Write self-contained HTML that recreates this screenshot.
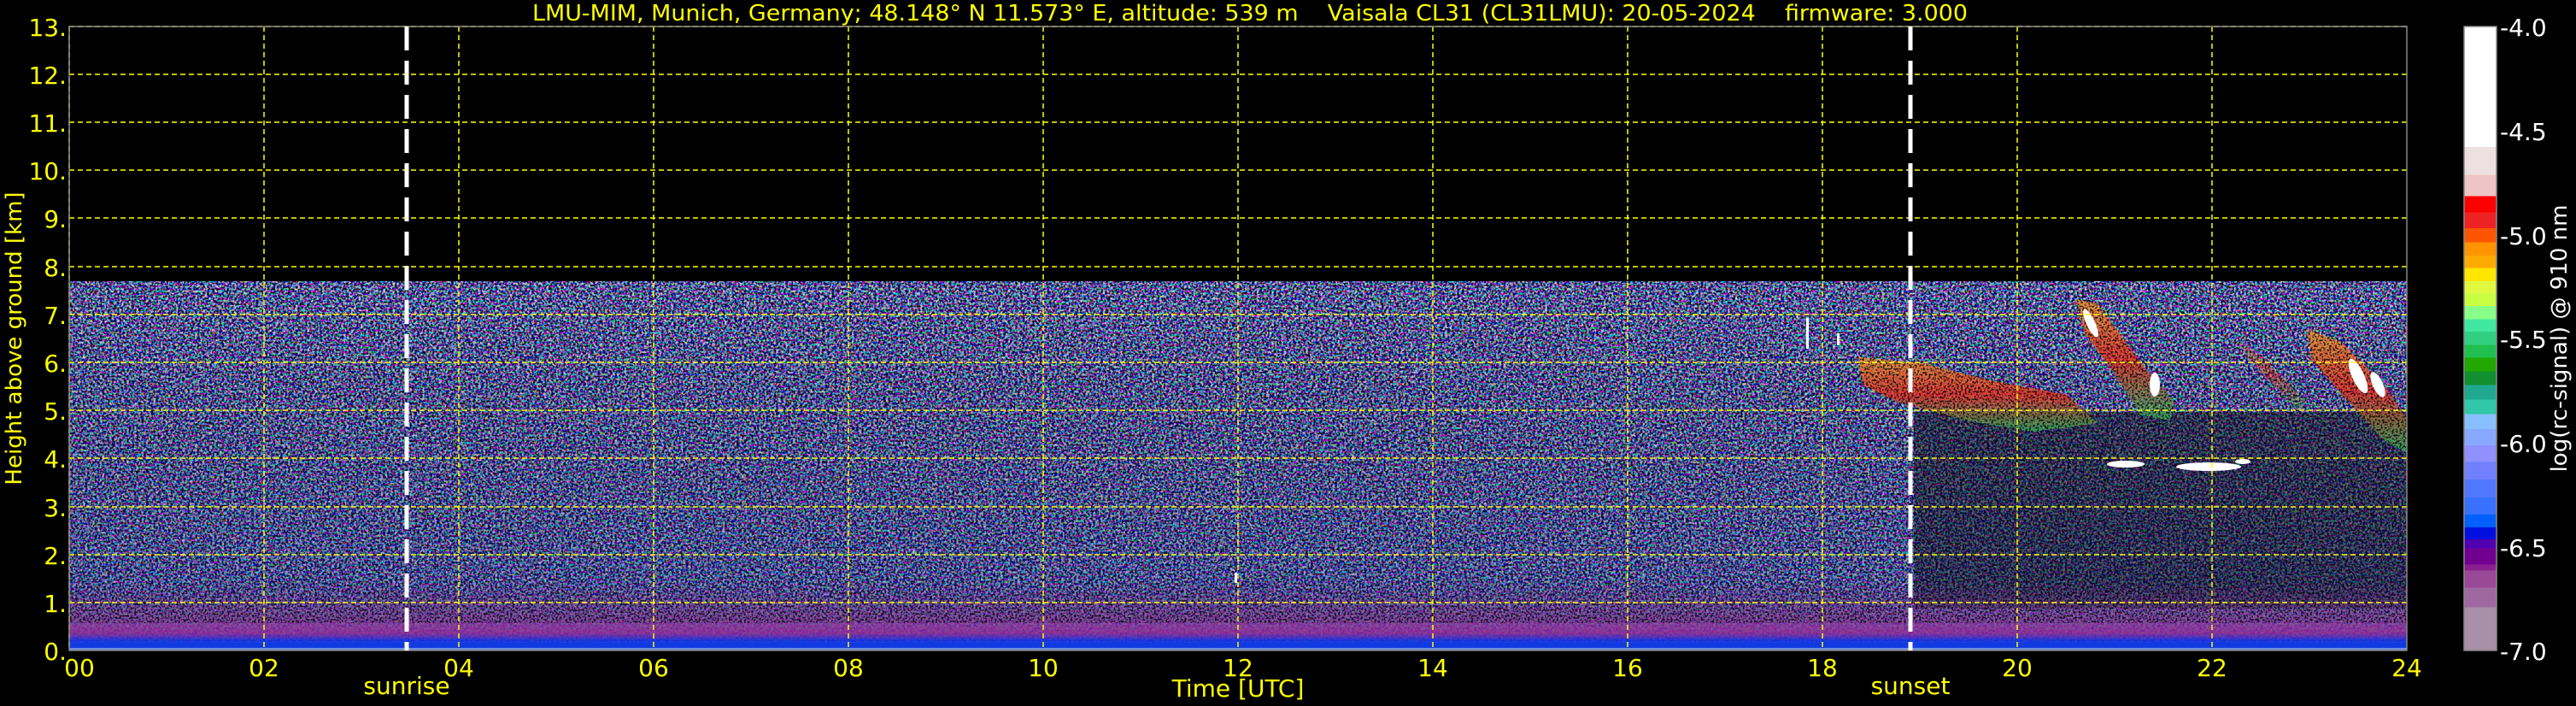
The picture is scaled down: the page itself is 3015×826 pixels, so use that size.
<!DOCTYPE html>
<html><head><meta charset="utf-8"><style>
html,body{margin:0;padding:0;background:#000;}
svg{display:block;}
text{font-family:"DejaVu Sans","Liberation Sans",sans-serif;}
</style></head><body>
<svg width="3015" height="826" viewBox="0 0 3015 826" xmlns="http://www.w3.org/2000/svg">
<defs>
<filter id="n" x="0" y="0" width="100%" height="100%" filterUnits="objectBoundingBox">
<feTurbulence type="fractalNoise" baseFrequency="0.35" numOctaves="2" seed="7"/>
<feComponentTransfer>
<feFuncR type="linear" slope="4.2" intercept="-1.8"/>
<feFuncG type="linear" slope="4.0" intercept="-1.65"/>
<feFuncB type="linear" slope="4.2" intercept="-1.1"/>
<feFuncA type="linear" slope="0" intercept="1"/>
</feComponentTransfer>
</filter>
<filter id="n2" x="0" y="0" width="100%" height="100%" filterUnits="objectBoundingBox">
<feTurbulence type="fractalNoise" baseFrequency="0.45" numOctaves="1" seed="3"/>
<feColorMatrix type="matrix" values="0 0 0 0 0  0 0 0 0 0  0 0 0 0 0  0 0 0 -6 3.1"/>
</filter>
<linearGradient id="cb" x1="0" y1="0" x2="0" y2="1">
<stop offset="0" stop-color="#fff"/><stop offset=".193" stop-color="#fff"/>
<stop offset=".193" stop-color="#ece0e0"/><stop offset=".238" stop-color="#ece0e0"/>
<stop offset=".238" stop-color="#efc4c4"/><stop offset=".272" stop-color="#efc4c4"/>
<stop offset=".272" stop-color="#ff0000"/><stop offset=".298" stop-color="#ff0000"/>
<stop offset=".298" stop-color="#ee2222"/><stop offset=".323" stop-color="#ee2222"/>
<stop offset=".323" stop-color="#ff5500"/><stop offset=".346" stop-color="#ff5500"/>
<stop offset=".346" stop-color="#ff9400"/><stop offset=".367" stop-color="#ff9400"/>
<stop offset=".367" stop-color="#ffaa00"/><stop offset=".387" stop-color="#ffaa00"/>
<stop offset=".387" stop-color="#ffe600"/><stop offset=".408" stop-color="#ffe600"/>
<stop offset=".408" stop-color="#e0f840"/><stop offset=".428" stop-color="#e0f840"/>
<stop offset=".428" stop-color="#c8ff40"/><stop offset=".448" stop-color="#c8ff40"/>
<stop offset=".448" stop-color="#88ff88"/><stop offset=".469" stop-color="#88ff88"/>
<stop offset=".469" stop-color="#40e8a0"/><stop offset=".489" stop-color="#40e8a0"/>
<stop offset=".489" stop-color="#30d080"/><stop offset=".510" stop-color="#30d080"/>
<stop offset=".510" stop-color="#20c050"/><stop offset=".531" stop-color="#20c050"/>
<stop offset=".531" stop-color="#20a800"/><stop offset=".553" stop-color="#20a800"/>
<stop offset=".553" stop-color="#109030"/><stop offset=".575" stop-color="#109030"/>
<stop offset=".575" stop-color="#20a890"/><stop offset=".598" stop-color="#20a890"/>
<stop offset=".598" stop-color="#30c8a8"/><stop offset=".621" stop-color="#30c8a8"/>
<stop offset=".621" stop-color="#88c0ff"/><stop offset=".645" stop-color="#88c0ff"/>
<stop offset=".645" stop-color="#88a8ff"/><stop offset=".671" stop-color="#88a8ff"/>
<stop offset=".671" stop-color="#9090ff"/><stop offset=".698" stop-color="#9090ff"/>
<stop offset=".698" stop-color="#7080ff"/><stop offset=".726" stop-color="#7080ff"/>
<stop offset=".726" stop-color="#5078ff"/><stop offset=".755" stop-color="#5078ff"/>
<stop offset=".755" stop-color="#3870ff"/><stop offset=".782" stop-color="#3870ff"/>
<stop offset=".782" stop-color="#0060ff"/><stop offset=".803" stop-color="#0060ff"/>
<stop offset=".803" stop-color="#0010e0"/><stop offset=".822" stop-color="#0010e0"/>
<stop offset=".822" stop-color="#5000b0"/><stop offset=".836" stop-color="#5000b0"/>
<stop offset=".836" stop-color="#700090"/><stop offset=".862" stop-color="#700090"/>
<stop offset=".862" stop-color="#8a2090"/><stop offset=".872" stop-color="#8a2090"/>
<stop offset=".872" stop-color="#9a4898"/><stop offset=".899" stop-color="#9a4898"/>
<stop offset=".899" stop-color="#a068a0"/><stop offset=".931" stop-color="#a068a0"/>
<stop offset=".931" stop-color="#a890a8"/><stop offset="1" stop-color="#a890a8"/>
</linearGradient>
<linearGradient id="bl" x1="0" y1="0" x2="0" y2="1">
<stop offset="0" stop-color="#802080" stop-opacity="0"/>
<stop offset=".45" stop-color="#8a3a90" stop-opacity=".55"/>
<stop offset=".75" stop-color="#902890" stop-opacity=".85"/>
<stop offset=".86" stop-color="#1030e0" stop-opacity=".9"/>
<stop offset="1" stop-color="#3070ff" stop-opacity="1"/>
</linearGradient>
<linearGradient id="low" x1="0" y1="0" x2="0" y2="1">
<stop offset="0" stop-color="#000" stop-opacity="0"/>
<stop offset="1" stop-color="#3040b0" stop-opacity=".3"/>
</linearGradient>
<linearGradient id="cl" x1="0" y1="0" x2="0" y2="1">
<stop offset="0" stop-color="#ffa020"/><stop offset=".5" stop-color="#ff2a10"/><stop offset="1" stop-color="#30c060"/>
</linearGradient>
</defs>

<rect x="81" y="329" width="2736" height="432" filter="url(#n)" opacity=".85"/>
<rect x="81" y="329" width="2736" height="432" fill="url(#low)"/>
<rect x="2240" y="482" width="577" height="230" fill="#000" opacity=".4"/>
<rect x="81" y="680" width="2736" height="81" fill="url(#bl)"/>
<rect x="81" y="752" width="2736" height="9" fill="#1038e0" opacity=".9"/>
<rect x="81" y="758" width="2736" height="3" fill="#7090e0"/>

<g opacity=".75">
<polygon points="2175,418 2250,425 2330,445 2420,462 2455,495 2380,505 2300,492 2220,470 2180,450" fill="url(#cl)"/>
<polygon points="2430,350 2455,355 2510,430 2545,470 2540,492 2505,485 2470,430 2440,390" fill="url(#cl)"/>
<polygon points="2700,385 2740,400 2790,450 2817,490 2817,530 2790,515 2740,460 2705,420" fill="url(#cl)"/>
<polygon points="2620,400 2650,420 2700,470 2690,480 2650,440" fill="url(#cl)" opacity=".6"/>
</g>
<rect x="81" y="329" width="2736" height="400" filter="url(#n2)" opacity=".8"/>
<g fill="#fff">
<ellipse cx="2447" cy="378" rx="5" ry="18" transform="rotate(-25 2447 378)"/>
<ellipse cx="2522" cy="450" rx="6" ry="14"/>
<ellipse cx="2760" cy="440" rx="7" ry="22" transform="rotate(-25 2760 440)"/>
<ellipse cx="2783" cy="450" rx="6" ry="16" transform="rotate(-25 2783 450)"/>
<ellipse cx="2488" cy="543" rx="22" ry="4"/>
<ellipse cx="2585" cy="546" rx="38" ry="5"/>
<ellipse cx="2625" cy="540" rx="9" ry="3"/>
<rect x="2114" y="372" width="3" height="36"/>
<rect x="2150" y="390" width="3" height="14"/>
<rect x="1445" y="670" width="3" height="12"/>
</g>

<g stroke="#ffff00" stroke-width="1.5" stroke-dasharray="6,4" fill="none">
<line x1="81" y1="31" x2="2817" y2="31"/>
<line x1="81" y1="87" x2="2817" y2="87"/>
<line x1="81" y1="143" x2="2817" y2="143"/>
<line x1="81" y1="199" x2="2817" y2="199"/>
<line x1="81" y1="255" x2="2817" y2="255"/>
<line x1="81" y1="312" x2="2817" y2="312"/>
<line x1="81" y1="368" x2="2817" y2="368"/>
<line x1="81" y1="424" x2="2817" y2="424"/>
<line x1="81" y1="480" x2="2817" y2="480"/>
<line x1="81" y1="536" x2="2817" y2="536"/>
<line x1="81" y1="593" x2="2817" y2="593"/>
<line x1="81" y1="649" x2="2817" y2="649"/>
<line x1="81" y1="705" x2="2817" y2="705"/>
<line x1="81" y1="31" x2="81" y2="761"/>
<line x1="309" y1="31" x2="309" y2="761"/>
<line x1="537" y1="31" x2="537" y2="761"/>
<line x1="765" y1="31" x2="765" y2="761"/>
<line x1="993" y1="31" x2="993" y2="761"/>
<line x1="1221" y1="31" x2="1221" y2="761"/>
<line x1="1449" y1="31" x2="1449" y2="761"/>
<line x1="1677" y1="31" x2="1677" y2="761"/>
<line x1="1905" y1="31" x2="1905" y2="761"/>
<line x1="2133" y1="31" x2="2133" y2="761"/>
<line x1="2361" y1="31" x2="2361" y2="761"/>
<line x1="2589" y1="31" x2="2589" y2="761"/>
</g>
<rect x="81" y="31" width="2736" height="730" fill="none" stroke="#888" stroke-width="1.5"/>
<g stroke="#fff" stroke-width="5" stroke-dasharray="28,12">
<line x1="476" y1="31" x2="476" y2="761"/>
<line x1="2236" y1="31" x2="2236" y2="761"/>
</g>

<text x="1463" y="24" fill="#ffff00" font-size="26" text-anchor="middle" textLength="1680" lengthAdjust="spacingAndGlyphs" xml:space="preserve">LMU-MIM, Munich, Germany; 48.148° N 11.573° E, altitude: 539 m    Vaisala CL31 (CL31LMU): 20-05-2024    firmware: 3.000</text>

<g fill="#ffff00" font-size="28" text-anchor="end">
<text x="78" y="42">13.</text><text x="78" y="98">12.</text><text x="78" y="154">11.</text>
<text x="78" y="210">10.</text><text x="78" y="266">9.</text><text x="78" y="323">8.</text>
<text x="78" y="379">7.</text><text x="78" y="435">6.</text><text x="78" y="491">5.</text>
<text x="78" y="547">4.</text><text x="78" y="604">3.</text><text x="78" y="660">2.</text>
<text x="78" y="716">1.</text><text x="78" y="772">0.</text>
</g>
<text transform="translate(25,396) rotate(-90)" fill="#ffff00" font-size="26" text-anchor="middle">Height above ground [km]</text>

<g fill="#ffff00" font-size="28" text-anchor="middle">
<text x="93" y="791">00</text><text x="309" y="791">02</text><text x="537" y="791">04</text>
<text x="765" y="791">06</text><text x="993" y="791">08</text><text x="1221" y="791">10</text>
<text x="1449" y="791">12</text><text x="1677" y="791">14</text><text x="1905" y="791">16</text>
<text x="2133" y="791">18</text><text x="2361" y="791">20</text><text x="2589" y="791">22</text>
<text x="2817" y="791">24</text>
<text x="476" y="812">sunrise</text>
<text x="2236" y="812">sunset</text>
<text x="1449" y="815">Time [UTC]</text>
</g>

<rect x="2884" y="31" width="38" height="730" fill="url(#cb)" stroke="#888" stroke-width="1.5"/>
<g fill="#fff" font-size="28">
<text x="2926" y="42">-4.0</text>
<text x="2926" y="164">-4.5</text>
<text x="2926" y="286">-5.0</text>
<text x="2926" y="407">-5.5</text>
<text x="2926" y="529">-6.0</text>
<text x="2926" y="651">-6.5</text>
<text x="2926" y="772">-7.0</text>
</g>
<text transform="translate(3004,396) rotate(-90)" fill="#fff" font-size="26" text-anchor="middle">log(rc-signal) @ 910 nm</text>
</svg>
</body></html>
